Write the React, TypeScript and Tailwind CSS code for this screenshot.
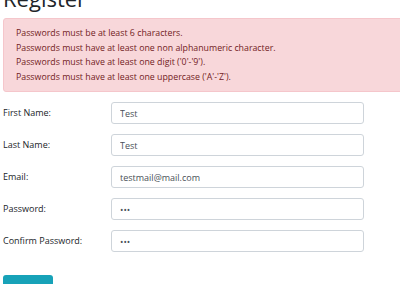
export default function App() {
  const errors = [
    "Passwords must be at least 6 characters.",
    "Passwords must have at least one non alphanumeric character.",
    "Passwords must have at least one digit ('0'-'9').",
    "Passwords must have at least one uppercase ('A'-'Z').",
  ];

  const fields = [
    { label: "First Name:", value: "Test", type: "text" },
    { label: "Last Name:", value: "Test", type: "text" },
    { label: "Email:", value: "testmail@mail.com", type: "text" },
    { label: "Password:", value: "abc", type: "password" },
    { label: "Confirm Password:", value: "abc", type: "password" },
  ];

  return (
    <div
      className="w-[400px] h-[284px] overflow-hidden bg-white text-[#212529]"
      style={{ fontFamily: '"Open Sans", "Noto Sans", sans-serif' }}
    >
      <div className="w-[420px] pl-[3px]">
        <h2 className="mt-[-15px] text-[22px] leading-[1.2] font-medium">Register</h2>

        <div className="mt-[7px] rounded-[3px] border border-[#f5c6cb] bg-[#f8d7da] px-[12px] py-[7px] text-[8.8px] leading-[14.4px] text-[#721c24]">
          {errors.map((e) => (
            <div key={e}>{e}</div>
          ))}
        </div>

        <form className="mt-[10px] flex flex-col gap-[10px]">
          {fields.map((f) => (
            <div key={f.label} className="flex items-center">
              <label className="w-[108px] text-[9px]">{f.label}</label>
              <input
                type={f.type}
                defaultValue={f.value}
                className="h-[22px] w-[253px] rounded-[3px] border border-[#ced4da] px-[8px] text-[9px] text-[#495057] outline-none"
              />
            </div>
          ))}

          <div className="mt-[11px]">
            <button
              type="button"
              className="rounded-[3px] bg-[#17a2b8] px-[10px] py-[6px] text-[9px] leading-[14px] text-white"
            >
              Submit
            </button>
          </div>
        </form>
      </div>
    </div>
  );
}
